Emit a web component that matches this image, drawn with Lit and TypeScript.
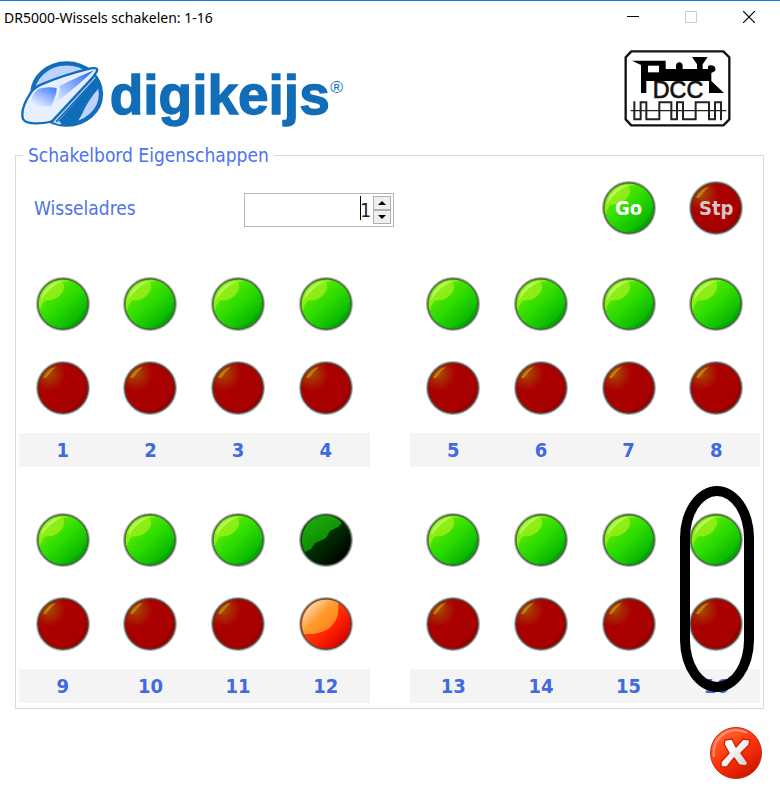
import { LitElement, html, svg, css, nothing } from "lit";
import { customElement, property, state } from "lit/decorators.js";

type LampKind = "green" | "red" | "green-dark" | "red-lit";

@customElement("lamp-button")
class LampButton extends LitElement {
  @property() kind: LampKind = "green";
  @property() label = "";
  @property() caption = "";

  static styles = css`
    :host {
      display: block;
      width: 54px;
      height: 54px;
    }
    .lamp {
      display: grid;
      place-items: center;
      width: 54px;
      height: 54px;
      padding: 0;
      border: 0;
      border-radius: 50%;
      background: none;
      cursor: pointer;
      font: bold 20px "DejaVu Sans Condensed", "DejaVu Sans", sans-serif;
      color: #ffffff;
    }
    .lamp > * {
      grid-area: 1 / 1;
    }
    .red .caption {
      color: #d6c6c6;
    }
  `;

  private face() {
    switch (this.kind) {
      case "green":
        return svg`
          <circle cx="27" cy="27" r="25.5" fill="url(#green)"/>
          <path d="M27 3A24 24 0 0 0 4 34Q5 27 9 23.500Q22 24 27 14Q29 9 27 5L34 4Q31 3 27 3Z" fill="#98ee18" opacity=".85"/>
          <path d="M5 23A23 23 0 0 1 27 4Q14 9 5 23Z" fill="#c8fa80" opacity=".75"/>
          <path d="M51 24A24.5 24.5 0 0 1 24 51Q46 47 51 24Z" fill="#008800" opacity=".3"/>`;
      case "red":
        return svg`
          <circle cx="27" cy="27" r="25.5" fill="url(#red)"/>
          <path d="M7 17Q12 7 20 6Q15 10 10 17Z" fill="#c09a10" opacity=".75"/>
          <path d="M51 24A24.5 24.5 0 0 1 24 51Q46 47 51 24Z" fill="#700000" opacity=".3"/>`;
      case "green-dark":
        return svg`
          <circle cx="27" cy="27" r="25.5" fill="url(#dark)"/>
          <path d="M27 2A25 25 0 0 0 6 39L12 36L16 30L27 25L31 18L39 14L43 10A25 25 0 0 0 27 2Z" fill="url(#darkTop)"/>`;
      case "red-lit":
        return svg`
          <circle cx="27" cy="27" r="25.5" fill="url(#lit)"/>
          <path d="M39 5A25 25 0 0 0 5 37Q27 38 35 26Q41 18 39 5Z" fill="url(#litTop)"/>`;
    }
  }

  render() {
    return html`
      <button class="lamp ${this.kind}" aria-label=${this.label}>
        <svg width="54" height="54" viewBox="0 0 54 54" aria-hidden="true">
          <defs>
            <linearGradient id="green" x1=".15" y1=".1" x2=".85" y2=".9">
              <stop offset="0" stop-color="#6cf000"/>
              <stop offset=".5" stop-color="#2cdb00"/>
              <stop offset="1" stop-color="#00ae00"/>
            </linearGradient>
            <radialGradient id="red" cx=".22" cy=".22" r=".8">
              <stop offset="0" stop-color="#a84a00"/>
              <stop offset=".42" stop-color="#aa0000"/>
              <stop offset="1" stop-color="#a80000"/>
            </radialGradient>
            <linearGradient id="dark" x1=".2" y1=".2" x2=".85" y2=".85">
              <stop offset=".3" stop-color="#003600"/>
              <stop offset=".65" stop-color="#002000"/>
              <stop offset="1" stop-color="#000000"/>
            </linearGradient>
            <linearGradient id="darkTop" x1=".2" y1="0" x2=".8" y2="1">
              <stop offset="0" stop-color="#22aa0a"/>
              <stop offset="1" stop-color="#008400"/>
            </linearGradient>
            <linearGradient id="lit" x1=".2" y1=".2" x2=".85" y2=".85">
              <stop offset="0" stop-color="#ff5a10"/>
              <stop offset=".6" stop-color="#ff2400"/>
              <stop offset="1" stop-color="#d80000"/>
            </linearGradient>
            <linearGradient id="litTop" x1=".1" y1=".05" x2=".9" y2=".8">
              <stop offset="0" stop-color="#ffe8d0"/>
              <stop offset=".38" stop-color="#ffb060"/>
              <stop offset=".5" stop-color="#ffa030"/>
              <stop offset="1" stop-color="#ff7d18"/>
            </linearGradient>
          </defs>
          ${this.face()}
          <circle cx="27" cy="27" r="25.8" fill="none" stroke="#404840" stroke-opacity=".4" stroke-width="2.4"/>
          <circle cx="27" cy="27" r="25.2" fill="none" stroke="#404840" stroke-opacity=".6" stroke-width="1.4"/>
        </svg>
        ${this.caption ? html`<span class="caption">${this.caption}</span>` : nothing}
      </button>
    `;
  }
}

@customElement("app-root")
class AppRoot extends LitElement {
  @state() private address = 1;

  static styles = css`
    :host {
      display: block;
      min-height: 100vh;
      box-sizing: border-box;
      border-top: 1px solid #1a7ad4;
      background: #ffffff;
      color: #4f73ea;
      font: 19px "DejaVu Sans Condensed", "DejaVu Sans", sans-serif;
    }
    .titlebar {
      display: flex;
      align-items: center;
      height: 32px;
      padding: 0 2px 0 4px;
      font: 14px "Noto Sans", sans-serif;
      color: #000000;
    }
    .title {
      flex: 1;
      margin: 0;
      font: inherit;
    }
    .window-button {
      display: grid;
      place-items: center;
      width: 58px;
      height: 32px;
      padding: 0;
      border: 0;
      background: none;
    }
    .header {
      display: flex;
      justify-content: space-between;
      align-items: flex-end;
      padding: 17px 48px 0 20px;
    }
    .header svg {
      display: block;
    }
    .board {
      margin: 15px 16px 0 15px;
      padding: 0 3px 5px;
      border: 1px solid #dcdcdc;
      min-width: 0;
    }
    .board-title {
      margin-left: 4px;
      padding: 0 5px;
      line-height: 24px;
    }
    .controls {
      display: flex;
      align-items: center;
      height: 82px;
      margin-bottom: 13px;
    }
    .address-label {
      flex: none;
      width: 225px;
      padding-left: 15px;
      box-sizing: border-box;
    }
    .spinner {
      position: relative;
      display: flex;
      box-sizing: border-box;
      width: 150px;
      height: 34px;
      margin: 4px auto 0 0;
      padding: 2px;
      border: 1px solid #b4b4bc;
    }
    .address {
      flex: 1;
      min-width: 0;
      height: 28px;
      padding: 0 2px 0 0;
      border: 0;
      outline: 0;
      text-align: right;
      background: none;
      color: #202020;
      font: inherit;
    }
    .caret {
      position: absolute;
      left: 115px;
      top: 2px;
      width: 1px;
      height: 24px;
      background: #000000;
    }
    .steps {
      display: flex;
      flex-direction: column;
      width: 18px;
    }
    .step {
      display: grid;
      place-items: center;
      flex: 1;
      padding: 0;
      border: 1px solid #b0b0b0;
      background: #efefef;
    }
    .control-cell {
      display: flex;
      justify-content: center;
      width: calc((100% - 40px) / 8);
    }
    .groups {
      display: grid;
      grid-template-columns: 1fr 1fr;
      gap: 31px 40px;
    }
    .group {
      display: grid;
      grid-template-columns: repeat(4, 1fr);
    }
    .channel {
      position: relative;
      display: flex;
      flex-direction: column;
      align-items: center;
    }
    .lamp-cell {
      display: grid;
      place-items: center;
      height: 84px;
    }
    .number {
      align-self: stretch;
      margin-top: 3px;
      background: #f4f4f4;
      color: #4169e1;
      font-size: 20px;
      font-weight: bold;
      line-height: 34px;
      text-align: center;
    }
    .marker {
      position: absolute;
      inset: -12px 6px 11px 8px;
      border: 10px solid #000000;
      border-radius: 37px / 52px;
      pointer-events: none;
    }
    .footer {
      display: flex;
      justify-content: flex-end;
      padding: 17px 17px 12px;
    }
    .close {
      width: 54px;
      height: 54px;
      padding: 0;
      border: 0;
      background: none;
    }
  `;

  private logo() {
    return html`
      <svg width="325" height="68" viewBox="60 177 975 204" role="img" aria-label="digikeijs">
        <defs>
          <linearGradient id="nose" x1="1" y1="0" x2="0" y2="1">
            <stop offset="0" stop-color="#1c62ff"/>
            <stop offset="1" stop-color="#e8f0ff"/>
          </linearGradient>
          <linearGradient id="window" x1="1" y1="0" x2=".3" y2="1">
            <stop offset="0" stop-color="#3a78ff"/>
            <stop offset="1" stop-color="#e8f0ff"/>
          </linearGradient>
        </defs>
        <ellipse cx="200" cy="279" rx="103" ry="92" fill="#bcd2ff" stroke="#116db8" stroke-width="13"/>
        <path d="M285 226L158 364L180 371L288 240Z" fill="#bcd2ff"/>
        <path d="M290 232L176 360Q188 374 228 370L246 340Q262 300 299 258Z" fill="#116db8"/>
        <path d="M288 233L169 362" stroke="#116db8" stroke-width="5"/>
        <path d="M272 202Q297 198 290 212L278 230L158 359Q148 366 112 367Q77 368 69 354Q60 324 91 277Q104 257 130 248Q190 222 272 202Z" fill="#e8f0ff" stroke="#116db8" stroke-width="7"/>
        <path d="M282 208Q240 225 178 255Q184 268 166 304Q205 280 282 208Z" fill="url(#nose)"/>
        <path d="M115 263Q145 255 170 261Q171 280 153 316Q126 320 91 310Q95 278 115 263Z" fill="url(#window)"/>
        <text x="329" y="340" font-family="Liberation Sans, Arial, sans-serif" font-weight="bold" font-size="165" fill="#116db8" stroke="#116db8" stroke-width="4">digikeijs</text>
        <text x="991" y="277" font-family="Liberation Sans, Arial, sans-serif" font-size="52" fill="#116db8">®</text>
      </svg>
    `;
  }

  private dcc() {
    return html`
      <svg width="108" height="78" viewBox="72 150 324 234" role="img" aria-label="DCC">
        <path d="M94 154H370L388 172V358L370 376H94L77 358V172Z" fill="#fff" stroke="#111" stroke-width="7" stroke-linejoin="round"/>
        <path d="M96 182H197V207H228V196Q230 187 238 187Q246 187 248 196V207H291V193L276 171H323L308 193V207H324V198Q331 194 342 198Q349 205 345 213L334 219V243L372 279H327V243H139V279H123V195Z" fill="#000"/>
        <path d="M144 197H177V217H144Z" fill="#fff"/>
        <text x="234" y="294" text-anchor="middle" font-family="Liberation Sans, Arial, sans-serif" font-size="70" fill="#111" stroke="#111" stroke-width="2">DCC</text>
        <path d="M92 332H379" stroke="#222" stroke-width="4"/>
        <path d="M103 304V358H122V307H139V358H178V307H214V358H231V307H249V358H287V307H327V358H345V307H363V361" fill="none" stroke="#222" stroke-width="6"/>
      </svg>
    `;
  }

  private lamp(kind: LampKind, label: string) {
    return html`<div class="lamp-cell"><lamp-button .kind=${kind} .label=${label}></lamp-button></div>`;
  }

  private channel(n: number) {
    const thrown = n === 12;
    return html`
      <div class="channel">
        ${this.lamp(thrown ? "green-dark" : "green", `Wissel ${n} groen`)}
        ${this.lamp(thrown ? "red-lit" : "red", `Wissel ${n} rood`)}
        <div class="number">${n}</div>
        ${n === 16 ? html`<div class="marker"></div>` : nothing}
      </div>
    `;
  }

  private step(delta: number) {
    this.address = Math.max(1, this.address + delta);
  }

  render() {
    return html`
      <header class="titlebar">
        <h1 class="title">DR5000-Wissels schakelen: 1-16</h1>
        <button class="window-button" aria-label="Minimaliseren">
          <svg width="12" height="12"><path d="M0 5.5H12" stroke="#000"/></svg>
        </button>
        <button class="window-button" aria-label="Maximaliseren" disabled>
          <svg width="12" height="12"><path d="M.5 .5H11.5V11.5H.5Z" fill="none" stroke="#ccc"/></svg>
        </button>
        <button class="window-button" aria-label="Sluiten">
          <svg width="12" height="12"><path d="M0 0L12 12M12 0L0 12" stroke="#000" stroke-width="1.2"/></svg>
        </button>
      </header>
      <div class="header">${this.logo()} ${this.dcc()}</div>
      <fieldset class="board">
        <legend class="board-title">Schakelbord Eigenschappen</legend>
        <div class="controls">
          <label class="address-label" for="address">Wisseladres</label>
          <div class="spinner">
            <input class="address" id="address" type="text" inputmode="numeric" .value=${String(this.address)}>
            <span class="caret"></span>
            <div class="steps">
              <button class="step" aria-label="Hoger" @click=${() => this.step(1)}>
                <svg width="8" height="4"><path d="M0 4L4 0L8 4Z"/></svg>
              </button>
              <button class="step" aria-label="Lager" @click=${() => this.step(-1)}>
                <svg width="8" height="4"><path d="M0 0L4 4L8 0Z"/></svg>
              </button>
            </div>
          </div>
          <div class="control-cell"><lamp-button kind="green" label="Go" caption="Go"></lamp-button></div>
          <div class="control-cell"><lamp-button kind="red" label="Stp" caption="Stp"></lamp-button></div>
        </div>
        <div class="groups">
          ${[1, 5, 9, 13].map(
            (first) => html`<div class="group">${[0, 1, 2, 3].map((i) => this.channel(first + i))}</div>`
          )}
        </div>
      </fieldset>
      <footer class="footer">
        <button class="close" aria-label="Venster sluiten">
          <svg width="54" height="54" viewBox="0 0 54 54">
            <defs>
              <linearGradient id="closeFill" x1=".2" y1=".05" x2=".8" y2=".95">
                <stop offset="0" stop-color="#ff6a3c"/>
                <stop offset=".5" stop-color="#ff3208"/>
                <stop offset="1" stop-color="#c81400"/>
              </linearGradient>
              <linearGradient id="cross" x1="0" y1="0" x2="1" y2="1">
                <stop offset=".3" stop-color="#ffffff"/>
                <stop offset="1" stop-color="#cccccc"/>
              </linearGradient>
            </defs>
            <circle cx="27" cy="27" r="25.5" fill="url(#closeFill)" stroke="#cc2410"/>
            <path d="M5 31A22.5 22.5 0 0 1 38 7" fill="none" stroke="#ff9474" stroke-width="2"/>
            <path d="M16 14L23 13L27 21L34 13L41 14L40 19L32 27L39 37L37 40L30 39L25 32L18 41L12 41L12 36L20 27L15 18Z" fill="url(#cross)" stroke="#d82000" stroke-width="1.5" stroke-linejoin="round"/>
          </svg>
        </button>
      </footer>
    `;
  }
}
